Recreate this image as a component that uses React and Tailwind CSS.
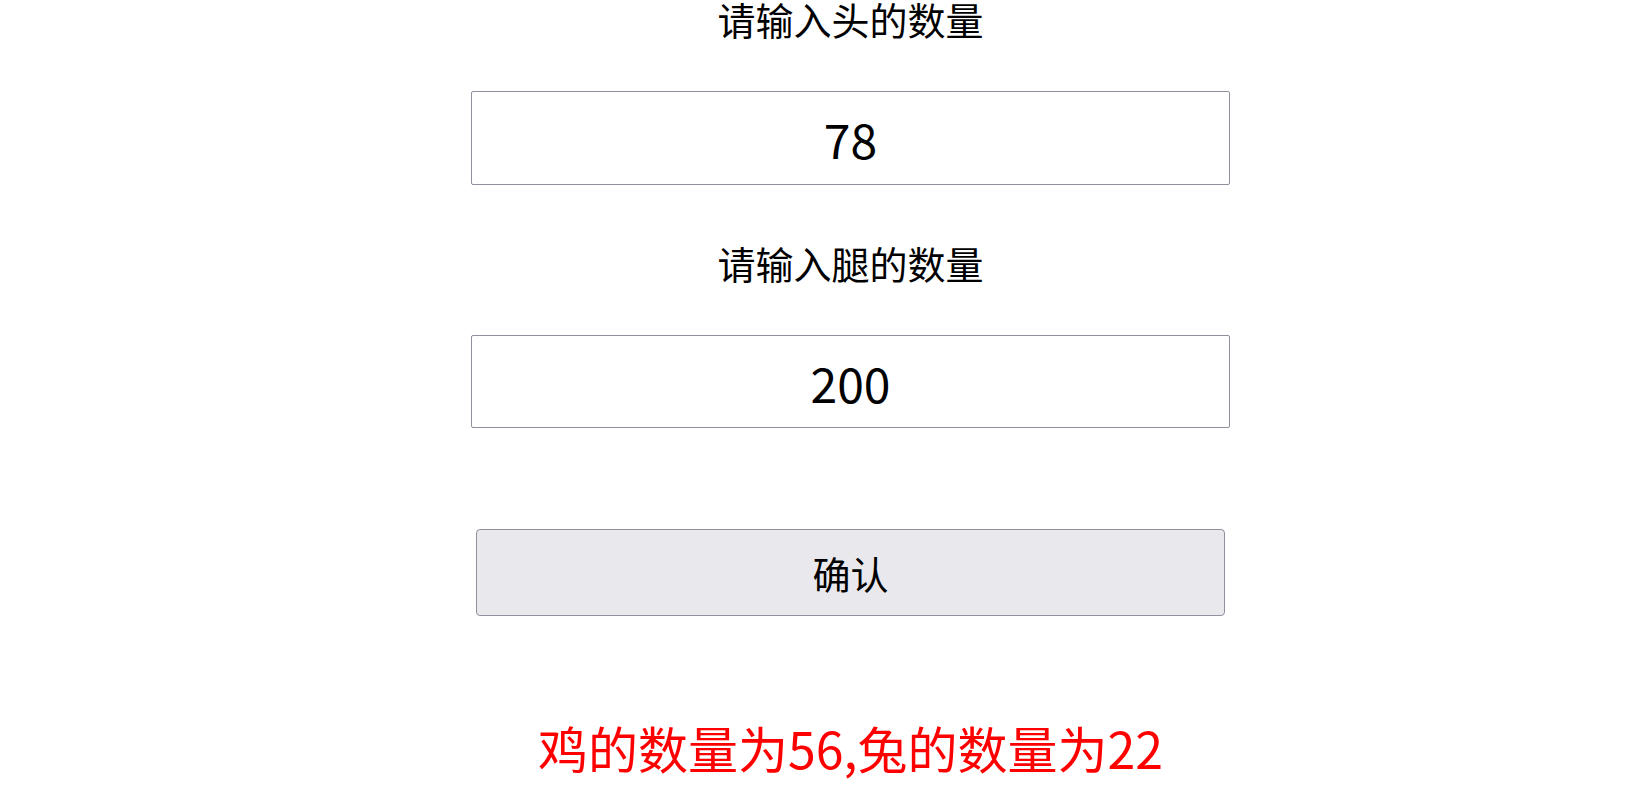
export default function App() {
  return (
    <div
      className="w-full min-h-[797px] bg-white overflow-hidden"
      style={{ fontFamily: '"Noto Sans CJK SC", "Noto Sans", sans-serif' }}
    >
      <div className="ml-[471px] w-[759px] flex flex-col items-center mt-[-3px]">
        <div className="h-[44px] leading-[44px] text-[38px] text-black">请输入头的数量</div>
        <input
          readOnly
          value="78"
          className="mt-[50px] w-[759px] h-[94px] border border-[#8f8f9d] rounded-[2px] text-center text-[48px] text-black bg-white outline-none"
          style={{ fontFamily: '"Noto Sans CJK SC", "Noto Sans", sans-serif' }}
        />
        <div className="mt-[56px] h-[44px] leading-[44px] text-[38px] text-black">请输入腿的数量</div>
        <input
          readOnly
          value="200"
          className="mt-[50px] w-[759px] h-[93px] border border-[#8f8f9d] rounded-[2px] text-center text-[48px] text-black bg-white outline-none"
          style={{ fontFamily: '"Noto Sans CJK SC", "Noto Sans", sans-serif' }}
        />
        <button
          className="mt-[101px] w-[749px] h-[87px] border border-[#8f8f9d] rounded-[4px] bg-[#e9e9ed] text-[38px] text-black"
          style={{ fontFamily: '"Noto Sans CJK SC", "Noto Sans", sans-serif' }}
        >
          确认
        </button>
        <div className="mt-[100px] h-[62px] leading-[62px] text-[50px] text-[#ff0000]">
          鸡的数量为56,兔的数量为22
        </div>
      </div>
    </div>
  );
}
